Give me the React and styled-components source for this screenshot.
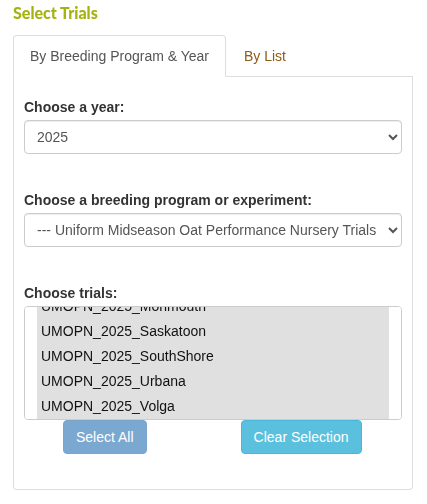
import React, { useEffect, useRef } from "react";
import styled, { createGlobalStyle } from "styled-components";

const GlobalStyle = createGlobalStyle`
  body {
    margin: 0;
    background: #fff;
    font-family: "Liberation Sans", Arial, sans-serif;
    font-size: 14px;
    color: #333;
  }
`;

const Wrapper = styled.div`
  width: 400px;
  margin-left: 13px;
`;

const Title = styled.h4`
  margin: 3px 0 12px;
  font-family: Lato, "Liberation Sans", sans-serif;
  font-weight: 900;
  font-size: 16px;
  line-height: 20px;
  color: #a6b20f;
`;

const TabNav = styled.ul`
  display: flex;
  margin: 0;
  padding: 0;
  list-style: none;
  border-bottom: 1px solid #ddd;
`;

const Tab = styled.li`
  margin-bottom: -1px;
  margin-right: 1px;
  padding: 10px 16px;
  line-height: 20px;
  border: 1px solid ${(p) => (p.active ? "#ddd" : "transparent")};
  border-bottom-color: transparent;
  border-radius: 4px 4px 0 0;
  background: ${(p) => (p.active ? "#fff" : "transparent")};
  color: ${(p) => (p.active ? "#555" : "#8e5a17")};
  cursor: pointer;
`;

const Panel = styled.div`
  border: 1px solid #ddd;
  border-top: none;
  border-radius: 0 0 4px 4px;
  padding: 20px 10px 35px;
`;

const Group = styled.div`
  margin-bottom: ${(p) => (p.tight ? "0" : "36px")};
`;

const Label = styled.label`
  display: block;
  font-weight: 700;
  line-height: 20px;
  margin-bottom: 3px;
  color: #333;
`;

const Select = styled.select`
  display: block;
  width: 100%;
  height: 34px;
  padding: 6px 2px 6px 8px;
  font-family: "Liberation Sans", Arial, sans-serif;
  font-size: 14px;
  color: #555;
  background: #fff;
  border: 1px solid #ccc;
  border-radius: 4px;
  box-shadow: inset 0 1px 1px rgba(0, 0, 0, 0.075);
`;

const ListBox = styled.div`
  height: 112px;
  overflow-y: auto;
  scrollbar-width: none;
  padding: 0 12px;
  border: 1px solid #ccc;
  border-radius: 4px;
  background: #fff;
  &::-webkit-scrollbar {
    display: none;
  }
`;

const Option = styled.div`
  height: 25px;
  line-height: 25px;
  padding-left: 4px;
  color: #111;
  background: ${(p) => (p.selected ? "#e0e0e0" : "transparent")};
  white-space: nowrap;
`;

const ButtonRow = styled.div`
  display: flex;
  gap: 94px;
  padding-left: 39px;
`;

const Button = styled.button`
  height: 34px;
  padding: 6px 12px;
  font-family: "Liberation Sans", Arial, sans-serif;
  font-size: 14px;
  line-height: 20px;
  color: #fff;
  border-radius: 4px;
  border: 1px solid ${(p) => p.border};
  background: ${(p) => p.bg};
  cursor: pointer;
`;

const trials = [
  "UMOPN_2025_Aberdeen",
  "UMOPN_2025_Ames",
  "UMOPN_2025_Crookston",
  "UMOPN_2025_Ithaca",
  "UMOPN_2025_Lacombe",
  "UMOPN_2025_Madison",
  "UMOPN_2025_Monmouth",
  "UMOPN_2025_Saskatoon",
  "UMOPN_2025_SouthShore",
  "UMOPN_2025_Urbana",
  "UMOPN_2025_Volga",
];

const App = () => {
  const listRef = useRef(null);

  useEffect(() => {
    if (listRef.current) {
      listRef.current.scrollTop = 6 * 25 + 13;
    }
  }, []);

  return (
    <Wrapper>
      <GlobalStyle />
      <Title>Select Trials</Title>
      <TabNav>
        <Tab active>By Breeding Program &amp; Year</Tab>
        <Tab>By List</Tab>
      </TabNav>
      <Panel>
        <Group>
          <Label>Choose a year:</Label>
          <Select defaultValue="2025">
            <option>2025</option>
            <option>2024</option>
            <option>2023</option>
          </Select>
        </Group>
        <Group>
          <Label>Choose a breeding program or experiment:</Label>
          <Select>
            <option>--- Uniform Midseason Oat Performance Nursery Trials</option>
          </Select>
        </Group>
        <Group tight>
          <Label>Choose trials:</Label>
          <ListBox ref={listRef}>
            {trials.map((t) => (
              <Option key={t} selected>
                {t}
              </Option>
            ))}
          </ListBox>
        </Group>
        <ButtonRow>
          <Button bg="#7aa8d0" border="#7aa6cc">
            Select All
          </Button>
          <Button bg="#5bc0de" border="#46b8da">
            Clear Selection
          </Button>
        </ButtonRow>
      </Panel>
    </Wrapper>
  );
};

export default App;
